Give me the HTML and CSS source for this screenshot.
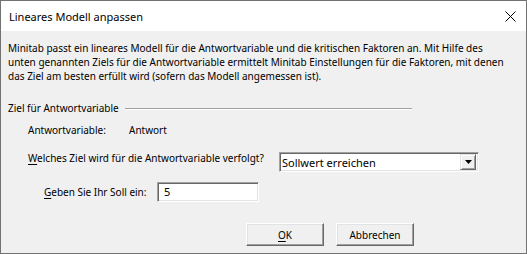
FILE: index.html
```html
<!DOCTYPE html>
<html lang="de">
<head>
<meta charset="utf-8">
<title>Lineares Modell anpassen</title>
<link rel="stylesheet" href="styles.css">
</head>
<body>
<div class="window">
  <div class="titlebar">
    <span class="title">Lineares Modell anpassen</span>
    <svg class="close" width="11" height="11" viewBox="0 0 11 11"><path d="M0.5 0.5 L10.5 10.5 M10.5 0.5 L0.5 10.5" stroke="#000" stroke-width="1" fill="none"/></svg>
  </div>
  <div class="content">
    <p class="intro">Minitab passt ein lineares Modell für die Antwortvariable und die kritischen Faktoren an. Mit Hilfe des<br>unten genannten Ziels für die Antwortvariable ermittelt Minitab Einstellungen für die Faktoren, mit denen<br>das Ziel am besten erfüllt wird (sofern das Modell angemessen ist).</p>
    <div class="group-head">
      <span>Ziel für Antwortvariable</span>
      <span class="etched"></span>
    </div>
    <div class="row resp">
      <span class="lbl-resp">Antwortvariable:</span>
      <span>Antwort</span>
    </div>
    <div class="row goal">
      <span class="lbl-goal"><u>W</u>elches Ziel wird für die Antwortvariable verfolgt?</span>
      <div class="combo">
        <span class="combo-text">Sollwert erreichen</span>
        <span class="combo-btn"><svg width="7" height="4" viewBox="0 0 7 4"><path d="M0 0 H7 L3.5 4 Z" fill="#000"/></svg></span>
      </div>
    </div>
    <div class="row target">
      <span class="lbl-target"><u>G</u>eben Sie Ihr Soll ein:</span>
      <div class="field">5</div>
    </div>
    <div class="buttons">
      <button class="btn"><u>O</u>K</button>
      <button class="btn">Abbrechen</button>
    </div>
  </div>
</div>
</body>
</html>
```
FILE: styles.css
```css
* { box-sizing: border-box; }
html, body { margin: 0; padding: 0; background: #f0f0f0; }
body { font-family: "Noto Sans", "Open Sans", sans-serif; font-size: 10px; color: #000; }
.window {
  width: 527px; height: 254px;
  border: 1px solid #727272;
  display: flex; flex-direction: column;
  background: #f0f0f0;
}
.titlebar {
  height: 30px; background: #fff;
  display: flex; align-items: center; justify-content: space-between;
  padding: 0 10px 0 8px;
}
.title { font-size: 11px; }
.close { display: block; }
.content { flex: 1; padding: 10px 7px 0 7px; }
.intro { margin: 0; line-height: 14px; white-space: nowrap; }
.group-head {
  display: flex; align-items: center; gap: 6px;
  margin-top: 18px; width: 404px; height: 14px;
  white-space: nowrap;
}
.etched { flex: 1; height: 2px; border-top: 1px solid #a0a0a0; border-bottom: 1px solid #fff; margin-top: 1px; }
.row { display: flex; align-items: center; white-space: nowrap; }
.resp { margin-top: 8px; padding-left: 20px; height: 14px; }
.lbl-resp { width: 101px; }
.goal { margin-top: 14px; padding-left: 20px; align-items: flex-start; }
.lbl-goal { width: 251px; line-height: 14px; }
.combo {
  width: 200px; height: 20px; margin-top: 1px;
  background: #fff;
  border-style: solid; border-width: 1px;
  border-color: #a0a0a0 #fff #fff #a0a0a0;
  display: flex; align-items: center;
  box-shadow: inset 1px 1px 0 #696969, inset -1px -1px 0 #e3e3e3;
  padding: 2px 2px 2px 2px;
}
.combo-text { flex: 1; font-size: 11px; }
.combo-btn {
  width: 16px; height: 16px; background: #f0f0f0;
  border-style: solid; border-width: 1px;
  border-color: #e3e3e3 #696969 #696969 #e3e3e3;
  box-shadow: inset 1px 1px 0 #fff, inset -1px -1px 0 #a0a0a0;
  display: flex; align-items: center; justify-content: center;
}
.combo-btn svg { display: block; }
.target { margin-top: 10px; padding-left: 36px; }
.lbl-target { width: 113px; }
.field {
  width: 102px; height: 20px; background: #fff;
  border-style: solid; border-width: 1px;
  border-color: #a0a0a0 #fff #fff #a0a0a0;
  box-shadow: inset 1px 1px 0 #696969, inset -1px -1px 0 #e3e3e3;
  padding: 0 0 0 6px;
  line-height: 18px;
  font-size: 11px;
}
.buttons { display: flex; gap: 12px; margin-top: 21px; padding-left: 238px; }
.btn {
  width: 78px; height: 23px;
  font: inherit; color: #000;
  background: #f0f0f0;
  border-style: solid; border-width: 1px;
  border-color: #fff #696969 #696969 #fff;
  box-shadow: inset -1px -1px 0 #a0a0a0, inset 1px 1px 0 #e3e3e3;
  padding: 0;
}
u { text-decoration-thickness: 1px; text-underline-offset: 2px; }
```
